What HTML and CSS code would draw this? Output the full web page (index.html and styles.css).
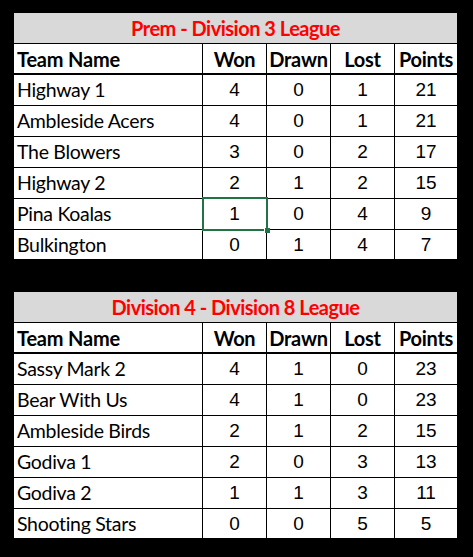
FILE: index.html
```html
<!DOCTYPE html>
<html>
<head>
<meta charset="utf-8">
<link rel="stylesheet" href="styles.css">
</head>
<body>
<div class="page">
  <table class="league">
    <colgroup><col class="c-team"><col class="c-num"><col class="c-num"><col class="c-num"><col class="c-last"></colgroup>
    <tr class="title-row"><td colspan="5" class="title">Prem - Division 3 League</td></tr>
    <tr class="head-row"><th class="team">Team Name</th><th>Won</th><th>Drawn</th><th>Lost</th><th class="last">Points</th></tr>
    <tr><td class="team">Highway 1</td><td>4</td><td>0</td><td>1</td><td class="last">21</td></tr>
    <tr><td class="team">Ambleside Acers</td><td>4</td><td>0</td><td>1</td><td class="last">21</td></tr>
    <tr><td class="team">The Blowers</td><td>3</td><td>0</td><td>2</td><td class="last">17</td></tr>
    <tr><td class="team">Highway 2</td><td>2</td><td>1</td><td>2</td><td class="last">15</td></tr>
    <tr><td class="team">Pina Koalas</td><td class="selected">1</td><td>0</td><td>4</td><td class="last">9</td></tr>
    <tr class="end-row"><td class="team">Bulkington</td><td>0</td><td>1</td><td>4</td><td class="last">7</td></tr>
  </table>

  <table class="league">
    <colgroup><col class="c-team"><col class="c-num"><col class="c-num"><col class="c-num"><col class="c-last"></colgroup>
    <tr class="title-row"><td colspan="5" class="title">Division 4 - Division 8 League</td></tr>
    <tr class="head-row"><th class="team">Team Name</th><th>Won</th><th>Drawn</th><th>Lost</th><th class="last">Points</th></tr>
    <tr><td class="team">Sassy Mark 2</td><td>4</td><td>1</td><td>0</td><td class="last">23</td></tr>
    <tr><td class="team">Bear With Us</td><td>4</td><td>1</td><td>0</td><td class="last">23</td></tr>
    <tr><td class="team">Ambleside Birds</td><td>2</td><td>1</td><td>2</td><td class="last">15</td></tr>
    <tr><td class="team">Godiva 1</td><td>2</td><td>0</td><td>3</td><td class="last">13</td></tr>
    <tr><td class="team">Godiva 2</td><td>1</td><td>1</td><td>3</td><td class="last">11</td></tr>
    <tr class="end-row"><td class="team">Shooting Stars</td><td>0</td><td>0</td><td>5</td><td class="last">5</td></tr>
  </table>
</div>
</body>
</html>
```
FILE: styles.css
```css
html, body {
  margin: 0;
  padding: 0;
  background: #000;
}
.page {
  display: flex;
  flex-direction: column;
  align-items: flex-start;
  gap: 33px;
  padding: 13px 0 0 14px;
}
.league {
  table-layout: fixed;
  border-collapse: separate;
  border-spacing: 0;
  width: 443px;
  background: #fff;
  font-family: "Liberation Sans", Arial, sans-serif;
  font-size: 19px;
  color: #000;
}
.c-team { width: 189px; }
.c-num { width: 64px; }
.c-last { width: 62px; }
.league td, .league th {
  padding: 0;
  height: 30px;
  box-sizing: content-box;
  border-right: 1px solid #000;
  border-bottom: 1px solid #000;
  text-align: center;
  vertical-align: middle;
  line-height: 20px;
}
.league .last { border-right: none; }
.league .title {
  height: 30px;
  background: #d9d9d9;
  color: #ff0000;
  font-family: Lato, "Liberation Sans", sans-serif;
  font-weight: 700;
  font-size: 20px;
  letter-spacing: -0.5px;
  border-right: none;
}
.head-row th {
  height: 29px;
  border-bottom: 2px solid #000;
  font-family: Lato, "Liberation Sans", sans-serif;
  font-weight: 700;
  font-size: 20px;
  letter-spacing: -0.3px;
}
.league .team {
  text-align: left;
  padding-left: 3px;
  font-family: Lato, "Liberation Sans", sans-serif;
  font-size: 19.5px;
  letter-spacing: -0.3px;
}
.head-row th.team {
  font-size: 20px;
  letter-spacing: -0.2px;
}
.end-row td {
  height: 29px;
  border-bottom: none;
}
.selected {
  position: relative;
}
.selected::before {
  content: "";
  position: absolute;
  left: -1px;
  top: -2px;
  right: -2px;
  bottom: -2px;
  border: 2px solid #217346;
}
.selected::after {
  content: "";
  position: absolute;
  right: -4px;
  bottom: -4px;
  width: 5px;
  height: 5px;
  background: #217346;
  box-shadow: -1px 0 0 #fff;
}
```
